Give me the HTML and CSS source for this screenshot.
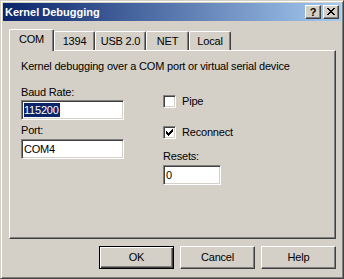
FILE: index.html
```html
<!DOCTYPE html>
<html>
<head>
<meta charset="utf-8">
<title>Kernel Debugging</title>
<link rel="stylesheet" href="styles.css">
</head>
<body>
<div class="window">
  <div class="titlebar">
    <span class="title">Kernel Debugging</span>
    <div class="caption-buttons">
      <div class="cbtn">?</div>
      <div class="cbtn">
        <svg class="glyph" width="8" height="7" viewBox="0 0 8 7"><path d="M0 0h2v1H0zM6 0h2v1H6zM1 1h2v1H1zM5 1h2v1H5zM2 2h4v1H2zM3 3h2v1H3zM2 4h4v1H2zM1 5h2v1H1zM5 5h2v1H5zM0 6h2v1H0zM6 6h2v1H6z" fill="#000"/></svg>
      </div>
    </div>
  </div>
  <div class="client">
    <div class="tabs">
      <div class="tab tab-com active">COM</div>
      <div class="tab tab-1394">1394</div>
      <div class="tab tab-usb">USB 2.0</div>
      <div class="tab tab-net">NET</div>
      <div class="tab tab-local">Local</div>
    </div>
    <div class="panel">
      <p class="desc">Kernel debugging over a COM port or virtual serial device</p>
      <div class="form">
        <div class="col-left">
          <div class="label">Baud Rate:</div>
          <div class="edit"><span class="sel">115200</span></div>
          <div class="label label-port">Port:</div>
          <div class="edit">COM4</div>
        </div>
        <div class="col-right">
          <div class="check check-pipe"><span class="box"></span><span>Pipe</span></div>
          <div class="check check-reconnect"><span class="box"><svg class="glyph" width="7" height="7" viewBox="0 0 7 7"><path d="M6 0h1v1H6zM5 1h2v1H5zM0 2h1v1H0zM4 2h3v1H4zM0 3h2v1H0zM3 3h3v1H3zM0 4h5v1H0zM1 5h3v1H1zM2 6h1v1H2z" fill="#000"/></svg></span><span>Reconnect</span></div>
          <div class="label label-resets">Resets:</div>
          <div class="edit edit-small">0</div>
        </div>
      </div>
    </div>
    <div class="buttons">
      <div class="btn btn-default">OK</div>
      <div class="btn">Cancel</div>
      <div class="btn">Help</div>
    </div>
  </div>
</div>
</body>
</html>
```

FILE: styles.css
```css
html, body {
  margin: 0;
  padding: 0;
  background: #d4d0c8;
}

body {
  font-family: "Liberation Sans", Arial, sans-serif;
  font-size: 11px;
  color: #000;
}

.window {
  width: 344px;
  height: 279px;
  box-sizing: border-box;
  border: 1px solid;
  border-color: #d4d0c8 #404040 #404040 #d4d0c8;
  box-shadow: inset 1px 1px #fff, inset -1px -1px #808080;
  padding: 2px;
  background: #d4d0c8;
  display: flex;
  flex-direction: column;
}

.titlebar {
  height: 18px;
  flex: none;
  display: flex;
  align-items: center;
  justify-content: space-between;
  background: linear-gradient(to right, #0a246a, #a6caf0);
  padding: 0 2px 0 2px;
}

.title {
  color: #fff;
  font-weight: bold;
  font-size: 11px;
  line-height: 18px;
  white-space: nowrap;
}

.caption-buttons {
  display: flex;
  gap: 2px;
}

.cbtn {
  width: 16px;
  height: 14px;
  box-sizing: border-box;
  border: 1px solid;
  border-color: #fff #404040 #404040 #fff;
  box-shadow: inset -1px -1px #808080;
  background: #d4d0c8;
  display: flex;
  align-items: center;
  justify-content: center;
  font-weight: bold;
  font-size: 11px;
  line-height: 12px;
  padding-bottom: 1px;
}

.glyph {
  display: block;
  shape-rendering: crispEdges;
}

.client {
  flex: 1;
  display: flex;
  flex-direction: column;
  padding: 8px 5px 7px 6px;
  letter-spacing: -0.2px;
}

.tabs {
  height: 21px;
  display: flex;
  align-items: flex-end;
  flex: none;
}

.tab {
  height: 19px;
  box-sizing: border-box;
  border-left: 1px solid #fff;
  border-top: 1px solid #fff;
  border-right: 1px solid #404040;
  box-shadow: inset -1px 0 #808080;
  border-radius: 2px 2px 0 0;
  display: flex;
  align-items: center;
  justify-content: center;
  line-height: 13px;
  padding-top: 1px;
  background: #d4d0c8;
}

.tab.active {
  height: 22px;
  margin-bottom: -1px;
  position: relative;
  z-index: 1;
  padding-top: 0;
  padding-bottom: 2px;
}

.tab-com { width: 45px; }
.tab-1394 { width: 41px; }
.tab-usb { width: 51px; }
.tab-net { width: 43px; }
.tab-local { width: 42px; }

.panel {
  height: 189px;
  box-sizing: border-box;
  flex: none;
  border: 1px solid;
  border-color: #fff #404040 #404040 #fff;
  box-shadow: inset -1px -1px #808080;
  padding: 9px 11px 0 11px;
}

.desc {
  margin: 0 0 13px 0;
  line-height: 13px;
  white-space: nowrap;
}

.form {
  display: flex;
  gap: 39px;
}

.col-left {
  width: 103px;
  display: flex;
  flex-direction: column;
}

.col-right {
  width: 58px;
  display: flex;
  flex-direction: column;
}

.label {
  line-height: 13px;
  height: 13px;
  margin-bottom: 1px;
  white-space: nowrap;
}

.label-port {
  margin-top: 4px;
  margin-bottom: 2px;
}

.label-resets {
  margin-top: 11px;
  margin-bottom: 2px;
}

.edit {
  height: 20px;
  box-sizing: border-box;
  border: 1px solid;
  border-color: #808080 #fff #fff #808080;
  box-shadow: inset 1px 1px #404040, inset -1px -1px #d4d0c8;
  background: #fff;
  padding: 0 2px 0 2px;
  display: flex;
  align-items: center;
  line-height: 14px;
}

.sel {
  background: #0a246a;
  color: #fff;
  line-height: 14px;
  padding-right: 1px;
}

.check {
  display: flex;
  align-items: center;
  gap: 6px;
  height: 13px;
  line-height: 13px;
  white-space: nowrap;
}

.check-pipe {
  margin-top: 9px;
}

.check-reconnect {
  margin-top: 18px;
}

.box {
  width: 13px;
  height: 13px;
  box-sizing: border-box;
  flex: none;
  border: 1px solid;
  border-color: #808080 #fff #fff #808080;
  box-shadow: inset 1px 1px #404040, inset -1px -1px #d4d0c8;
  background: #fff;
  display: flex;
  align-items: center;
  justify-content: center;
}

.buttons {
  display: flex;
  justify-content: flex-end;
  gap: 6px;
  margin-top: 7px;
  flex: none;
}

.btn {
  width: 75px;
  height: 23px;
  box-sizing: border-box;
  border: 1px solid;
  border-color: #fff #404040 #404040 #fff;
  box-shadow: inset -1px -1px #808080;
  display: flex;
  align-items: center;
  justify-content: center;
  line-height: 13px;
}

.btn-default {
  border-color: #000;
  box-shadow: inset 1px 1px #fff, inset -1px -1px #404040, inset -2px -2px #808080;
}
```
